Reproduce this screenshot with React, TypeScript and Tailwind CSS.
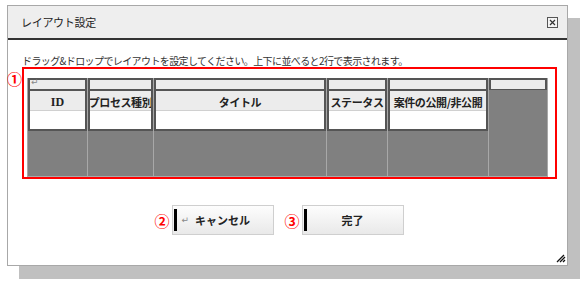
import { ReactNode } from 'react';

const JP = { fontFamily: '"Noto Sans CJK JP", "Noto Sans", sans-serif' };

interface Column {
  label: string;
  width: string;
  serif?: boolean;
  mark?: boolean;
  empty?: boolean;
}

const columns: Column[] = [
  { label: 'ID', width: 'w-[59px]', serif: true, mark: true },
  { label: 'プロセス種別', width: 'w-[65px]' },
  { label: 'タイトル', width: 'w-[172px]' },
  { label: 'ステータス', width: 'w-[60px]' },
  { label: '案件の公開/非公開', width: 'w-[100px]' },
  { label: '', width: 'w-[58px]', empty: true },
];

function Badge({ children, className }: { children: ReactNode; className: string }) {
  return (
    <span
      className={`absolute text-[15px] font-bold leading-[15px] text-[#ff0000] ${className}`}
      style={JP}
    >
      {children}
    </span>
  );
}

function LayoutColumn({ col }: { col: Column }) {
  return (
    <div className={`${col.width} flex flex-col bg-[#808080]`}>
      {/* drop slot */}
      <div className="relative h-[12px] border-x-2 border-t-2 border-b border-[#555] bg-[#ececec]">
        {col.mark && (
          <span className="absolute left-[1px] top-[-4px] text-[9px] leading-[12px] text-[#888]" style={{ fontFamily: '"DejaVu Sans", sans-serif' }}>
            ↵
          </span>
        )}
      </div>
      {!col.empty && (
        <div className="flex flex-col border-x-2 border-b-2 border-t border-[#555]">
          <div className="flex h-[20px] items-center justify-center overflow-hidden whitespace-nowrap border-b border-[#d0d0d0] bg-[#ececec] pt-[3px]">
            {col.serif ? (
              <span className="text-[12px] font-bold text-[#222]" style={{ fontFamily: '"Liberation Serif", serif' }}>
                {col.label}
              </span>
            ) : (
              <span className="text-[11px] font-bold tracking-[-0.4px] text-[#222]" style={JP}>
                {col.label}
              </span>
            )}
          </div>
          <div className="h-[18px] bg-white" />
        </div>
      )}
    </div>
  );
}

function DialogButton({ label, badge, cursor }: { label: string; badge: string; cursor?: boolean }) {
  return (
    <div className="relative">
      <Badge className="left-[-17px] top-[8px]">{badge}</Badge>
      <button className="relative flex h-[30px] w-[102px] items-center justify-center border border-[#cfcfcf] bg-gradient-to-b from-[#fdfdfd] to-[#e9e9e9]">
        <span className="absolute left-[1px] top-[3px] h-[22px] w-[3px] bg-black" />
        {cursor && (
          <span className="absolute left-[9px] top-[8px] text-[9px] text-[#888]" style={{ fontFamily: '"DejaVu Sans", sans-serif' }}>
            ↵
          </span>
        )}
        <span className="text-[11px] font-bold text-[#222]" style={JP}>
          {label}
        </span>
      </button>
    </div>
  );
}

export default function App() {
  return (
    <div className="h-[281px] w-[580px] overflow-hidden bg-white pl-[7px] pt-[5px]">
      <div className="relative flex h-[261px] w-[561px] flex-col border border-[#a8a8a8] bg-white shadow-[12px_13px_0_#c0c0c0]">
        {/* Title bar */}
        <div className="flex h-[34px] items-center justify-between border-b-2 border-[#333] bg-[#eeeeee] pl-[13px] pr-[9px]">
          <span className="text-[11px] tracking-[-0.3px] text-[#222]" style={JP}>
            レイアウト設定
          </span>
          <svg width="11" height="11" viewBox="0 0 11 11">
            <rect x="0.5" y="0.5" width="10" height="10" fill="#f4f4f4" stroke="#555" />
            <path d="M3 3 L8 8 M8 3 L3 8" stroke="#333" strokeWidth="1.2" />
          </svg>
        </div>

        {/* Body */}
        <p className="ml-[14px] mt-[15px] h-[12px] text-[10px] leading-[12px] tracking-[-0.6px] text-[#333]" style={JP}>
          ドラッグ&ドロップでレイアウトを設定してください。上下に並べると2行で表示されます。
        </p>

        <div className="relative ml-[14px] h-[112px] w-[535px] border-2 border-[#ff0000] pl-[3px] pt-[9px]">
          <Badge className="left-[-17px] top-[2px]">①</Badge>
          <div className="flex h-[99px] w-[521px] gap-px bg-[#a8a8a8] px-px pb-px">
            {columns.map((col) => (
              <LayoutColumn key={col.label || 'blank'} col={col} />
            ))}
          </div>
        </div>

        <div className="mt-[26px] flex justify-center gap-[28px]">
          <DialogButton label="キャンセル" badge="②" cursor />
          <DialogButton label="完了" badge="③" />
        </div>

        {/* resize grip */}
        <svg className="absolute bottom-[2px] right-[1px]" width="10" height="9" viewBox="0 0 10 9">
          <path d="M1 8 L8 1 M4 8 L9 3 M7 8 L9 6" stroke="#111" strokeWidth="1.3" />
        </svg>
      </div>
    </div>
  );
}
